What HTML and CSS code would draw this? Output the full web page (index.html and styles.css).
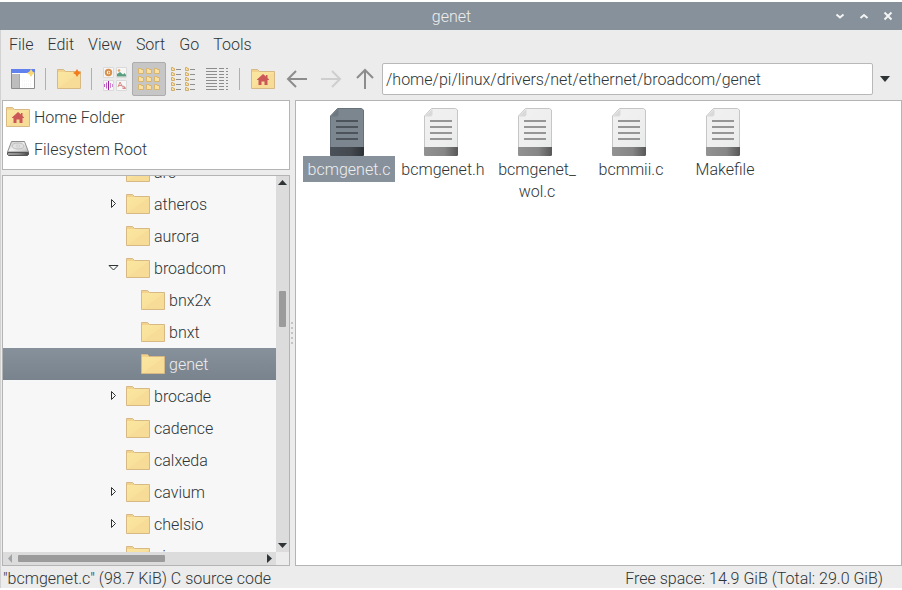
FILE: index.html
```html
<!DOCTYPE html>
<html lang="en">
<head>
<meta charset="utf-8">
<title>genet</title>
<link rel="stylesheet" href="styles.css">
</head>
<body>
<svg class="defs" aria-hidden="true">
  <defs>
    <linearGradient id="g-folder" x1="0" y1="0" x2="1" y2="1">
      <stop offset="0" stop-color="#fae69f"/><stop offset=".5" stop-color="#f9e19c"/><stop offset=".52" stop-color="#f7dc98"/><stop offset="1" stop-color="#f7dc98"/>
    </linearGradient>
    <linearGradient id="g-foot" x1="0" y1="0" x2="1" y2="0">
      <stop offset="0" stop-color="#929292"/><stop offset=".6" stop-color="#868686"/><stop offset="1" stop-color="#585858"/>
    </linearGradient>
    <linearGradient id="g-footsel" x1="0" y1="0" x2="1" y2="0">
      <stop offset="0" stop-color="#4b5158"/><stop offset=".6" stop-color="#444a50"/><stop offset="1" stop-color="#2d3237"/>
    </linearGradient>
    <linearGradient id="g-page" x1="0" y1="0" x2="1" y2="1">
      <stop offset="0" stop-color="#f1f1f1"/><stop offset=".6" stop-color="#eeeeee"/><stop offset="1" stop-color="#e5e9e8"/>
    </linearGradient>
    <linearGradient id="g-disk" x1="0" y1="0" x2="1" y2="1">
      <stop offset="0" stop-color="#c8c8c8"/><stop offset=".5" stop-color="#f0f0f0"/><stop offset="1" stop-color="#bcbcbc"/>
    </linearGradient>
    <linearGradient id="g-diskfront" x1="0" y1="0" x2="1" y2="0">
      <stop offset="0" stop-color="#a0a0a0"/><stop offset=".5" stop-color="#8a8a8a"/><stop offset="1" stop-color="#4a4a4a"/>
    </linearGradient>
    <symbol id="folder" viewBox="0 0 24 24">
      <path d="M.5 21.500V2.500H6.500L8.500 4.500H23.500V21.500Z" fill="#f3d28d" stroke="#d6b985"/>
      <path d="M1 5H23V21H1Z" fill="url(#g-folder)"/>
    </symbol>
    <symbol id="home" viewBox="0 0 24 24">
      <use href="#folder" width="24" height="24"/>
      <path d="M12 7L15 9.500V8H16.500V11L18 12.500V13H16.500V18H13.500V14.500H10.500V18H7.500V13H6V12.500Z" fill="#cb5757"/>
    </symbol>
    <symbol id="disk" viewBox="0 0 24 24">
      <path d="M5.500 4.500H18.500L22.500 15H1.500Z" fill="url(#g-disk)" stroke="#8e8e8e"/>
      <ellipse cx="12" cy="9" rx="6" ry="3" fill="#e2e2e2" stroke="#bdbdbd"/>
      <ellipse cx="12" cy="9" rx="2" ry="1" fill="#f5f5f5" stroke="#c8c8c8"/>
      <path d="M1.500 15.500H22.500V17.500L21.500 18.500H2.500L1.500 17.500Z" fill="url(#g-diskfront)" stroke="#555"/>
    </symbol>
    <symbol id="doc" viewBox="0 0 48 48">
      <path d="M13.500 .5H37.500L39.500 2V47.500H6.500V8Z" transform="translate(-1 0)" fill="url(#g-page)" stroke="#c6c6c6"/>
      <path d="M13.500 1V7L12 8.500H6Z" fill="#d9d9d9"/>
      <path d="M5 39H39V47L38 48H6L5 47Z" fill="url(#g-foot)"/>
      <path d="M11 13H33M11 19H33M11 25H33M11 31H33" stroke="#969696" stroke-width="2"/>
    </symbol>
    <symbol id="doc-sel" viewBox="0 0 48 48">
      <path d="M13.500 .5H37.500L39.500 2V47.500H6.500V8Z" transform="translate(-1 0)" fill="#7b868f" stroke="#68727a"/>
      <path d="M13.500 1V7L12 8.500H6Z" fill="#6e7881"/>
      <path d="M5 39H39V47L38 48H6L5 47Z" fill="url(#g-footsel)"/>
      <path d="M11 13H33M11 19H33M11 25H33M11 31H33" stroke="#4c535a" stroke-width="2"/>
    </symbol>
    <symbol id="mini" viewBox="0 0 6 6">
      <path d="M.5 5.500V.5H3L3.500 1.500H5.500V5.500Z" fill="#f9dfa0" stroke="#d9b46c"/>
    </symbol>
    <symbol id="mini-s" viewBox="0 0 4 4">
      <path d="M.5 3.500V.5H2L2.500 1.500H3.500V3.500Z" fill="#f9dfa0" stroke="#d0ad6c"/>
    </symbol>
    <symbol id="closed" viewBox="0 0 12 12"><path d="M4.500 1.500V9.500L8.500 5.500Z" fill="none" stroke="#2e3436"/></symbol>
    <symbol id="open" viewBox="0 0 12 12"><path d="M2 3.500H11L6.500 8Z" fill="none" stroke="#2e3436"/></symbol>
  </defs>
</svg>

<div class="window">
  <header class="titlebar">
    <h1>genet</h1>
    <div class="controls">
      <button aria-label="Minimise"><svg viewBox="0 0 12 12"><path d="M2.500 4.500L6 7.500L9.500 4.500"/></svg></button>
      <button aria-label="Maximise"><svg viewBox="0 0 12 12"><path d="M2.500 8L6 5L9.500 8"/></svg></button>
      <button aria-label="Close"><svg viewBox="0 0 12 12"><path d="M2.500 2.500L9.500 9.500M9.500 2.500L2.500 9.500"/></svg></button>
    </div>
  </header>

  <nav class="menubar">
    <button>File</button><button>Edit</button><button>View</button><button>Sort</button><button>Go</button><button>Tools</button>
  </nav>

  <div class="toolbar">
    <button class="tool" aria-label="New window"><svg viewBox="0 0 24 24">
      <path d="M.5 2.500H23.500V21.500H.5Z" fill="#fff" stroke="#8c8c8c"/><path d="M1 7H8V21H1Z" fill="#bdbdbd"/><path d="M8.500 7V21" stroke="#aaa"/>
      <path d="M0 2H24V6H0Z" fill="#6182ee"/><path d="M11 17H21M11 14H21M11 19H21" stroke="#eee" stroke-dasharray="1 1"/><path d="M20 2L21.500 4.500L24 6L21.500 7.500L20 10L18.500 7.500L16 6L18.500 4.500Z" fill="#f8d777"/></svg></button>
    <span class="sep"></span>
    <button class="tool" aria-label="New folder"><svg viewBox="0 0 24 24"><use href="#folder" width="24" height="24"/><path d="M20 2L21.500 4.500L24 6L21.500 7.500L20 10L18.500 7.500L16 6L18.500 4.500Z" fill="#f47b1b"/></svg></button>
    <span class="sep"></span>
    <button class="tool" aria-label="Icon view"><svg viewBox="0 0 24 24">
      <path d="M.5 .5H10.500V10.500H.5ZM13.500 .5H23.500V10.500H13.500ZM.5 13.500H10.500V23.500H.5ZM13.500 13.500H23.500V23.500H13.500Z" fill="#f6f6f6" stroke="#dadada"/>
      <circle cx="5.500" cy="5.500" r="2.700" fill="#fff" stroke="#d9904c" stroke-width="2"/><path d="M5 4L7 5.500L5 7Z" fill="#d9904c"/>
      <path d="M14 9.500V7L17 5L20 7.500L21.500 6L23 8V9.500Z" fill="#5a9e80"/><circle cx="16" cy="3.500" r="1.300" fill="#dda160"/>
      <path d="M1.500 17V20M3.500 15.500V21.500" stroke="#c05fc4"/><path d="M5.500 14V23" stroke="#9a1f9c"/><path d="M7.500 16V21M9.500 17V20" stroke="#c98acb"/>
      <path d="M15 20L17 15L19.500 20M15.500 18.500H19M20 18.500L22.500 21.500M19.500 21.500C20 19.500 22 19 22.500 21.500H20" fill="none" stroke="#d98a88"/></svg></button>
    <button class="tool active" aria-label="Small icon view" aria-pressed="true"><svg viewBox="0 0 24 24">
      <use href="#mini" x="1" y="1" width="6" height="6"/><use href="#mini" x="9" y="1" width="6" height="6"/><use href="#mini" x="17" y="1" width="6" height="6"/>
      <use href="#mini" x="1" y="9" width="6" height="6"/><use href="#mini" x="9" y="9" width="6" height="6"/><use href="#mini" x="17" y="9" width="6" height="6"/>
      <use href="#mini" x="1" y="17" width="6" height="6"/><use href="#mini" x="9" y="17" width="6" height="6"/><use href="#mini" x="17" y="17" width="6" height="6"/></svg></button>
    <button class="tool" aria-label="Compact view"><svg viewBox="0 0 24 24">
      <use href="#mini-s" x="0" y="0" width="4" height="4"/><use href="#mini-s" x="0" y="5" width="4" height="4"/><use href="#mini-s" x="0" y="10" width="4" height="4"/><use href="#mini-s" x="0" y="15" width="4" height="4"/><use href="#mini-s" x="0" y="20" width="4" height="4"/>
      <use href="#mini-s" x="14" y="0" width="4" height="4"/><use href="#mini-s" x="14" y="5" width="4" height="4"/><use href="#mini-s" x="14" y="10" width="4" height="4"/><use href="#mini-s" x="14" y="15" width="4" height="4"/><use href="#mini-s" x="14" y="20" width="4" height="4"/>
      <path d="M5 2.500H10M5 7.500H10M5 12.500H10M5 17.500H10M5 22.500H10M19 2.500H24M19 7.500H24M19 12.500H24M19 17.500H24M19 22.500H24" stroke="#909090"/></svg></button>
    <button class="tool" aria-label="Detailed list view"><svg viewBox="0 0 24 24"><path d="M1 1.500H12M1 4.500H12M1 7.500H12M1 10.500H12M1 13.500H12M1 16.500H12M1 19.500H12M1 22.500H12M14 1.500H19M14 4.500H19M14 7.500H19M14 10.500H19M14 13.500H19M14 16.500H19M14 19.500H19M14 22.500H19M21 1.500H23M21 4.500H23M21 7.500H23M21 10.500H23M21 13.500H23M21 16.500H23M21 19.500H23M21 22.500H23" stroke="#8c8c8c"/></svg></button>
    <span class="sep"></span>
    <button class="tool" aria-label="Home"><svg><use href="#home"/></svg></button>
    <button class="tool arrow" aria-label="Back"><svg viewBox="0 0 24 24"><path d="M22 12H3M11 4L3 12L11 20"/></svg></button>
    <button class="tool arrow" aria-label="Forward" disabled><svg viewBox="0 0 24 24"><path d="M2 12H21M13 4L21 12L13 20"/></svg></button>
    <button class="tool arrow" aria-label="Up"><svg viewBox="0 0 24 24"><path d="M12 22V3M4 11L12 3L20 11"/></svg></button>
    <input class="path" type="text" aria-label="Path" value="/home/pi/linux/drivers/net/ethernet/broadcom/genet">
    <button class="history" aria-label="Path history"><svg viewBox="0 0 10 6"><path d="M0 0H10L5 6Z"/></svg></button>
  </div>

  <main class="panes">
    <div class="side">
      <ul class="places">
        <li><a class="row" href="#"><svg><use href="#home"/></svg>Home Folder</a></li>
        <li><a class="row" href="#"><svg><use href="#disk"/></svg>Filesystem Root</a></li>
      </ul>
      <div class="treebox">
        <div class="viewport">
          <ul class="tree">
            <li><button class="row"><svg class="exp"></svg><svg><use href="#folder"/></svg>arc</button></li>
            <li><button class="row"><svg class="exp"><use href="#closed"/></svg><svg><use href="#folder"/></svg>atheros</button></li>
            <li><button class="row"><svg class="exp"></svg><svg><use href="#folder"/></svg>aurora</button></li>
            <li><button class="row"><svg class="exp"><use href="#open"/></svg><svg><use href="#folder"/></svg>broadcom</button>
              <ul>
                <li><button class="row"><svg class="exp"></svg><svg><use href="#folder"/></svg>bnx2x</button></li>
                <li><button class="row"><svg class="exp"></svg><svg><use href="#folder"/></svg>bnxt</button></li>
                <li><button class="row selected"><svg class="exp"></svg><svg><use href="#folder"/></svg>genet</button></li>
              </ul>
            </li>
            <li><button class="row"><svg class="exp"><use href="#closed"/></svg><svg><use href="#folder"/></svg>brocade</button></li>
            <li><button class="row"><svg class="exp"></svg><svg><use href="#folder"/></svg>cadence</button></li>
            <li><button class="row"><svg class="exp"></svg><svg><use href="#folder"/></svg>calxeda</button></li>
            <li><button class="row"><svg class="exp"><use href="#closed"/></svg><svg><use href="#folder"/></svg>cavium</button></li>
            <li><button class="row"><svg class="exp"><use href="#closed"/></svg><svg><use href="#folder"/></svg>chelsio</button></li>
            <li><button class="row"><svg class="exp"></svg><svg><use href="#folder"/></svg>cirrus</button></li>
          </ul>
        </div>
        <div class="vbar">
          <svg viewBox="0 0 13 13"><path d="M2 9H11L6.500 4Z"/></svg>
          <div class="vtrack"><span class="before"></span><span class="thumb"></span><span class="after"></span></div>
          <svg viewBox="0 0 13 13"><path d="M2 4H11L6.500 9Z"/></svg>
        </div>
        <div class="hbar">
          <svg class="dim" viewBox="0 0 13 13"><path d="M9 2V11L5 6.500Z"/></svg>
          <div class="htrack"><span class="thumb"></span><span class="after"></span></div>
          <svg viewBox="0 0 13 13"><path d="M4 2V11L9 6.500Z"/></svg>
        </div>
      </div>
    </div>
    <div class="splitter"><i></i><i></i><i></i><i></i><i></i></div>
    <ul class="files">
      <li class="selected"><svg><use href="#doc-sel"/></svg><span>bcmgenet.c</span></li>
      <li><svg><use href="#doc"/></svg><span>bcmgenet.h</span></li>
      <li><svg><use href="#doc"/></svg><span>bcmgenet_<wbr>wol.c</span></li>
      <li><svg><use href="#doc"/></svg><span>bcmmii.c</span></li>
      <li><svg><use href="#doc"/></svg><span>Makefile</span></li>
    </ul>
  </main>

  <footer class="status">
    <span>"bcmgenet.c" (98.7 KiB) C source code</span>
    <span>Free space: 14.9 GiB (Total: 29.0 GiB)</span>
  </footer>
</div>
</body>
</html>
```
FILE: styles.css
```css
* { box-sizing: border-box; }
body {
  margin: 0;
  padding: 2px 0;
  height: 100vh;
  background: #fff;
  color: #2e3436;
  font: 300 16px/22px Roboto, "Liberation Sans", sans-serif;
}
button, input { font: inherit; color: inherit; border: 0; background: none; margin: 0; padding: 0; }
ul { list-style: none; margin: 0; padding: 0; }
a { color: inherit; text-decoration: none; }
svg { display: block; flex: none; width: 24px; height: 24px; }
.defs { position: absolute; width: 0; height: 0; }

.window { height: 100%; display: flex; flex-direction: column; background: #ececec; }

.titlebar {
  display: grid;
  grid-template-columns: 1fr auto 1fr;
  align-items: center;
  height: 28px;
  flex: none;
  background: #87919b;
  color: #eee;
}
.titlebar h1 { grid-column: 2; margin: 0; padding: 2px 0 0 1px; font-size: 16px; font-weight: 300; }
.controls { display: flex; justify-content: flex-end; gap: 12px; padding-right: 8px; }
.controls svg { width: 12px; height: 12px; fill: none; stroke: #f4f4f4; stroke-width: 2; }

.menubar { display: flex; gap: 14px; padding: 4px 8px 0; height: 32px; flex: none; align-items: flex-start; border-left: 1px solid #d2d2d2; }

.toolbar { display: flex; align-items: center; height: 34px; flex: none; padding: 0 5px; border-left: 1px solid #d2d2d2; }
.tool { width: 34px; height: 34px; flex: none; display: grid; place-items: center; border-radius: 2px; }
.tool.active { background: #c6c6c6; border: 1px solid #adadad; }
.sep { width: 12px; height: 22px; flex: none; background: linear-gradient(#b0b0b0, #b0b0b0) 5px 0 / 1px 100% no-repeat; }
.arrow svg { fill: none; stroke: #8c8c8c; stroke-width: 2; }
.arrow:disabled svg { stroke: #cecece; }
.path { flex: 1; min-width: 0; height: 32px; padding: 0 3px; border: 1px solid #b8b8b8; border-radius: 2px; background: #fff; }
.history { width: 24px; flex: none; display: grid; place-items: center; }
.history svg { width: 10px; height: 6px; fill: #2e3436; }

.panes { flex: 1; min-height: 0; display: flex; padding: 4px 0 0 1px; border-left: 1px solid #d2d2d2; }
.side { width: 288px; flex: none; display: flex; flex-direction: column; gap: 5px; }
.places { flex: none; height: 70px; padding: 0 3px; background: #fff; border: 1px solid #b4b4b4; }
.row { display: flex; align-items: center; gap: 4px; height: 32px; padding-top: 2px; }
.row svg { margin-bottom: 2px; }

.treebox {
  flex: 1;
  min-height: 0;
  display: grid;
  grid-template: minmax(0, 1fr) 13px / minmax(0, 1fr) 13px;
  border: 1px solid #b4b4b4;
}
.viewport { overflow: hidden; background: #f7f7f7; }
.tree { margin-top: -20px; }
.tree .row { width: 100%; padding-left: 104px; text-align: left; }
.tree ul .row { padding-left: 119px; }
.tree .exp { width: 12px; height: 12px; margin-right: 3px; }
.tree .selected { background: linear-gradient(#87919b, #79838d); color: #eee; }

.vbar, .hbar { display: flex; background: #dcdcdc; }
.vbar { flex-direction: column; }
.vbar svg, .hbar svg { width: 13px; height: 13px; fill: #2e3436; }
.hbar .dim { fill: #a0a4a6; }
.vtrack, .htrack { flex: 1; display: flex; }
.vtrack { flex-direction: column; padding: 0 3px; }
.htrack { padding: 3px 0 3px 2px; }
.thumb { background: #9b9b9b; border-radius: 1px; }
.vtrack .before { flex: 102; }
.vtrack .thumb { flex: 36; }
.vtrack .after { flex: 212; }
.htrack .thumb { flex: 147; }
.htrack .after { flex: 98; }

.splitter { width: 5px; flex: none; display: flex; flex-direction: column; justify-content: center; align-items: flex-start; gap: 3px; padding-left: 1px; }
.splitter i { width: 2px; height: 2px; background: #c4c4c4; }

.files { flex: 1; min-width: 0; display: flex; flex-wrap: wrap; align-content: flex-start; padding: 7px 6px; background: #fff; border: 1px solid #b4b4b4; }
.files li { width: 94px; display: flex; flex-direction: column; align-items: center; text-align: center; }
.files svg { width: 48px; height: 48px; }
.files span { padding: 3px 5px 1px; }
.files .selected span { background: #87919b; color: #eee; }

.status { flex: none; display: flex; justify-content: space-between; height: 22px; line-height: 26px; padding: 0 19px 0 2px; border-left: 1px solid #d2d2d2; }
```
